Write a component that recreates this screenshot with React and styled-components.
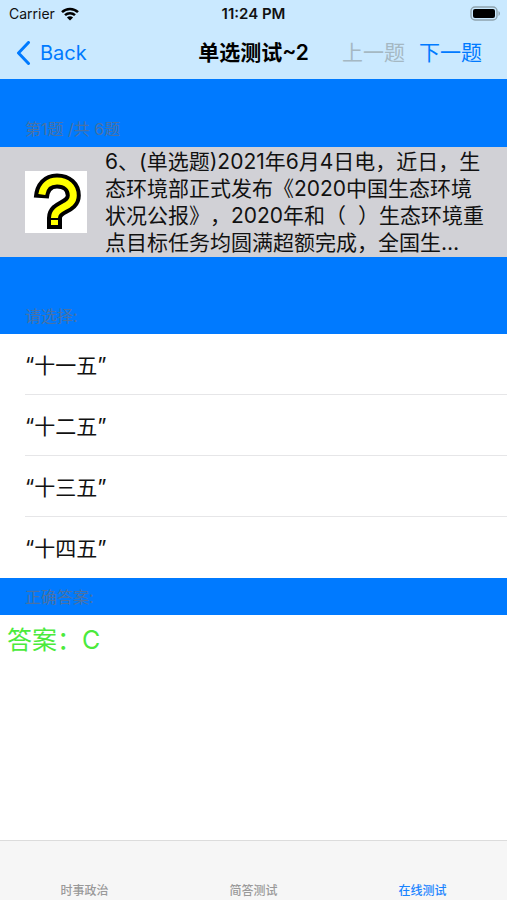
import React from "react";
import styled, { createGlobalStyle } from "styled-components";

const options = ["“十一五”", "“十二五”", "“十三五”", "“十四五”"];
const tabs = ["时事政治", "简答测试", "在线测试"];

const App = () => {
  const [tab, setTab] = React.useState("在线测试");

  return (
    <>
      <GlobalStyle />
      <Page>
        <TopBar>
          <StatusBar>
            <Carrier>
              Carrier
              <WifiIcon />
            </Carrier>
            <Clock>11:24 PM</Clock>
            <BatteryIcon />
          </StatusBar>
          <NavBar>
            <BackButton>
              <BackIcon />
              Back
            </BackButton>
            <Title>单选测试~2</Title>
            <NavActions>
              <NavButton disabled>上一题</NavButton>
              <NavButton>下一题</NavButton>
            </NavActions>
          </NavBar>
        </TopBar>

        <main>
          <SectionHeader $height="68px">第1题 /共 6题</SectionHeader>
          <Question>
            <QuestionIcon />
            <QuestionText>
              6、(单选题)2021年6月4日电，近日，生态环境部正式发布《2020中国生态环境状况公报》，2020年和（&nbsp; ）生态环境重点目标任务均圆满超额完成，全国生…
            </QuestionText>
          </Question>

          <SectionHeader $height="77px">请选择:</SectionHeader>
          <OptionList>
            {options.map((option) => (
              <li key={option}>
                <OptionButton>{option}</OptionButton>
              </li>
            ))}
          </OptionList>

          <SectionHeader $height="37px">正确答案:</SectionHeader>
          <Answer>答案：C</Answer>
        </main>

        <TabBar>
          {tabs.map((name) => (
            <TabButton key={name} $active={name === tab} onClick={() => setTab(name)}>
              {name}
            </TabButton>
          ))}
        </TabBar>
      </Page>
    </>
  );
};

export default App;

const WifiIcon = () => (
  <svg width="18" height="14" viewBox="0 0 18 14" aria-hidden="true">
    <g fill="none" stroke="#000" strokeWidth="2.5">
      <path d="M1 5.2C5.4 0.9 12.6 0.9 17 5.2" />
      <path d="M4 8.2c2.8-2.7 7.2-2.7 10 0" />
    </g>
    <path d="M9 13.6 5.9 10.4c1.7-1.6 4.5-1.6 6.2 0z" />
  </svg>
);

const BatteryIcon = () => (
  <svg width="31" height="15" viewBox="0 0 31 15" aria-hidden="true">
    <rect x="1" y="1" width="26" height="13" rx="4" fill="none" stroke="#8fa3ae" strokeWidth="1.4" />
    <rect x="3" y="3" width="22" height="9" rx="2" />
    <path d="M28.5 5v5c2-1 2-4 0-5z" fill="#8fa3ae" />
  </svg>
);

const BackIcon = () => (
  <svg width="15" height="24" viewBox="0 0 15 24" aria-hidden="true">
    <path
      d="M12.5 1.5 2.5 12l10 10.5"
      fill="none"
      stroke="#007aff"
      strokeWidth="3"
      strokeLinecap="round"
      strokeLinejoin="round"
    />
  </svg>
);

const QuestionIcon = () => (
  <svg width="62" height="62" viewBox="0 0 62 62" aria-hidden="true">
    <rect width="62" height="62" fill="#fff" />
    <g fill="none">
      <path
        d="M16.3 27C17 16 23 10 32 10c10 0 16.3 6 16.3 14.5C48.3 37 29.5 35 29.5 47v11"
        stroke="#000"
        strokeWidth="15"
      />
      <path
        d="M16.8 23.5C18 15 24 10 32 10c10 0 16.3 6 16.3 14.5C48.3 37 29.5 35 29.5 47"
        stroke="#ff0"
        strokeWidth="7"
      />
    </g>
    <rect x="26" y="49" width="7" height="5" fill="#ff0" />
  </svg>
);

const GlobalStyle = createGlobalStyle`
  * {
    box-sizing: border-box;
  }
  body {
    margin: 0;
    font-family: Inter, "Noto Sans CJK SC", sans-serif;
    text-spacing-trim: space-all;
    color: #111;
    background: #fff;
  }
  button {
    font-family: inherit;
    border: none;
    padding: 0;
    background: none;
    cursor: pointer;
  }
`;

const Page = styled.div`
  min-height: 100vh;
  display: flex;
  flex-direction: column;
  main {
    flex: 1;
  }
`;

const TopBar = styled.header`
  background: #cae9ff;
`;

const StatusBar = styled.div`
  height: 27px;
  padding: 0 6px;
  display: grid;
  grid-template-columns: 1fr auto 1fr;
  align-items: center;
  font-size: 14px;
  svg:last-child {
    justify-self: end;
  }
`;

const Carrier = styled.div`
  padding-left: 3px;
  display: flex;
  align-items: center;
  gap: 6px;
`;

const Clock = styled.span`
  font-size: 15px;
  font-weight: 600;
`;

const NavBar = styled.nav`
  height: 52px;
  padding: 0 16px;
  display: grid;
  grid-template-columns: 1fr auto 1fr;
  align-items: center;
`;

const NavButton = styled.button`
  font-size: 21px;
  line-height: 28px;
  white-space: nowrap;
  color: #007aff;

  &:disabled {
    color: #a5b8c3;
    cursor: default;
  }
`;

const BackButton = styled(NavButton)`
  display: flex;
  align-items: center;
  gap: 9px;
  font-size: 20px;
`;

const Title = styled.h1`
  margin: 0;
  font-size: 21px;
  line-height: 28px;
  font-weight: 600;
  color: #000;
`;

const NavActions = styled.div`
  padding-right: 9px;
  display: flex;
  justify-content: flex-end;
  gap: 14px;
`;

const SectionHeader = styled.h2`
  height: ${(props) => props.$height};
  margin: 0;
  padding: 0 25px 8px;
  display: flex;
  align-items: flex-end;
  font-size: 16px;
  line-height: 20px;
  font-weight: 400;
  color: #4a72a4;
  background: #007aff;
`;

const Question = styled.section`
  padding: 1px 20px 1px 25px;
  display: flex;
  align-items: center;
  gap: 18px;
  background: #d1d1d6;
  svg {
    flex-shrink: 0;
  }
`;

const QuestionText = styled.p`
  margin: 0;
  font-size: 21px;
  line-height: 27px;
`;

const OptionList = styled.ul`
  margin: 0;
  padding: 0 0 0 25px;
  list-style: none;
  li {
    border-bottom: 1px solid #e6e6e8;
  }
  li:last-child {
    border-color: transparent;
  }
`;

const OptionButton = styled.button`
  display: block;
  width: 100%;
  height: 60px;
  font-size: 21px;
  text-align: left;
  color: #111;
`;

const Answer = styled.p`
  margin: 0;
  padding: 7px;
  font-size: 25px;
  line-height: 36px;
  color: #4bea3c;
`;

const TabBar = styled.nav`
  height: 60px;
  display: flex;
  border-top: 1px solid #dcdcdc;
  background: #f6f6f6;
`;

const TabButton = styled.button`
  flex: 1;
  display: flex;
  align-items: flex-end;
  justify-content: center;
  font-size: 12px;
  line-height: 18px;
  font-weight: 500;
  color: ${(props) => (props.$active ? "#1a84ff" : "#999")};
`;
